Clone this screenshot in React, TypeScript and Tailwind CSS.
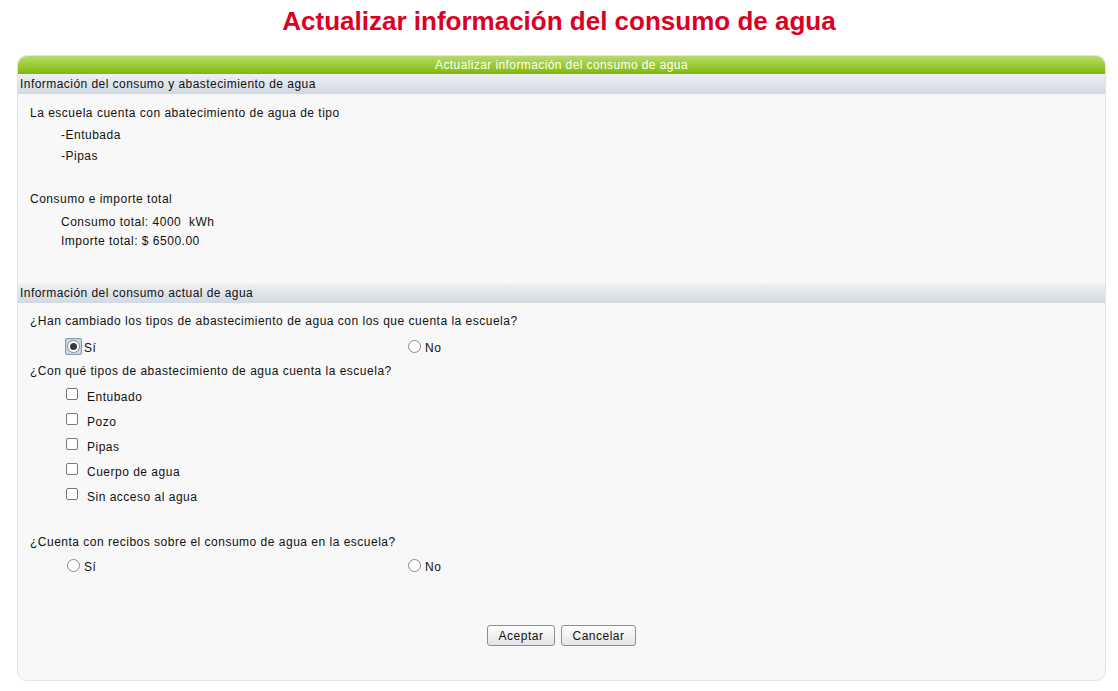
import React from "react";

const font = { fontFamily: '"Liberation Sans", Arial, sans-serif' };

function Radio({ checked, label }: { checked?: boolean; label: string }) {
  return (
    <label className="flex items-center">
      <span className={checked ? "flex items-center justify-center w-[17px] h-[17px] rounded-[2px] border border-[#7d97b8] bg-[#c9d6e6]" : "flex items-center justify-center w-[17px] h-[17px]"}>
        <span className="flex items-center justify-center w-[13px] h-[13px] rounded-full border border-[#8a8a8a] bg-white">
          {checked && <span className="w-[7px] h-[7px] rounded-full bg-[#3a3a3a]" />}
        </span>
      </span>
      <span className="ml-[2px] mt-[3px]">{label}</span>
    </label>
  );
}

function Check({ label }: { label: string }) {
  return (
    <label className="flex items-center h-[25px]">
      <span className="w-[12px] h-[12px] rounded-[2px] border border-[#7a7a7a] bg-white -mt-[4px]" />
      <span className="ml-[9px] mt-[2px]">{label}</span>
    </label>
  );
}

function SectionBar({ title }: { title: string }) {
  return (
    <div className="h-[20px] pl-[2px] flex items-center bg-gradient-to-b from-[#eef1f4] to-[#d1d9e2] text-[12px] text-[#111] tracking-[0.45px]">
      {title}
    </div>
  );
}

export default function App() {
  return (
    <div className="w-[1118px] h-[691px] bg-white text-[12px] text-[#111] tracking-[0.5px]" style={font}>
      <h1 className="pt-[2px] h-[55px] text-center text-[26px] font-bold text-[#dc0025] tracking-normal">
        Actualizar información del consumo de agua
      </h1>
      <div className="mx-[17px] w-[1089px] h-[626px] rounded-[10px] border border-[#e2e2e2] bg-[#f8f8f8] overflow-hidden flex flex-col">
        <div className="h-[18px] flex items-center justify-center bg-gradient-to-b from-[#b6dc6a] via-[#9ccb34] to-[#82b800] text-white text-[12px] tracking-[0.4px]">
          Actualizar información del consumo de agua
        </div>
        <SectionBar title="Información del consumo y abastecimiento de agua" />
        <div className="pl-[12px] pt-[10px] h-[189px]">
          <div className="h-[22px]">La escuela cuenta con abatecimiento de agua de tipo</div>
          <div className="pl-[31px] h-[21px]">-Entubada</div>
          <div className="pl-[31px] h-[21px]">-Pipas</div>
          <div className="h-[22px]" />
          <div className="h-[23px]">Consumo e importe total</div>
          <div className="pl-[31px] h-[19px]">Consumo total: 4000&nbsp; kWh</div>
          <div className="pl-[31px] h-[20px]">Importe total: $ 6500.00</div>
        </div>
        <SectionBar title="Información del consumo actual de agua" />
        <div className="pl-[12px] pt-[9px] flex-1 flex flex-col">
          <div className="h-[22px]">¿Han cambiado los tipos de abastecimiento de agua con los que cuenta la escuela?</div>
          <div className="grid grid-cols-[341px_1fr] pl-[35px] h-[25px] items-center">
            <Radio checked label="Sí" />
            <Radio label="No" />
          </div>
          <div className="h-[23px] flex items-center">¿Con qué tipos de abastecimiento de agua cuenta la escuela?</div>
          <div className="pl-[36px] pt-[1px] flex flex-col">
            <Check label="Entubado" />
            <Check label="Pozo" />
            <Check label="Pipas" />
            <Check label="Cuerpo de agua" />
            <Check label="Sin acceso al agua" />
          </div>
          <div className="h-[22px]" />
          <div className="h-[23px] flex items-center">¿Cuenta con recibos sobre el consumo de agua en la escuela?</div>
          <div className="grid grid-cols-[341px_1fr] pl-[35px] h-[25px] items-center">
            <Radio label="Sí" />
            <Radio label="No" />
          </div>
          <div className="flex justify-center gap-[6px] mt-[47px] -ml-[12px]">
            <button className="h-[21px] w-[68px] rounded-[3px] border border-[#8e8e8e] bg-gradient-to-b from-white to-[#e4e4e4] text-[12px] text-[#111]">
              Aceptar
            </button>
            <button className="h-[21px] w-[75px] rounded-[3px] border border-[#8e8e8e] bg-gradient-to-b from-white to-[#e4e4e4] text-[12px] text-[#111]">
              Cancelar
            </button>
          </div>
        </div>
      </div>
    </div>
  );
}
